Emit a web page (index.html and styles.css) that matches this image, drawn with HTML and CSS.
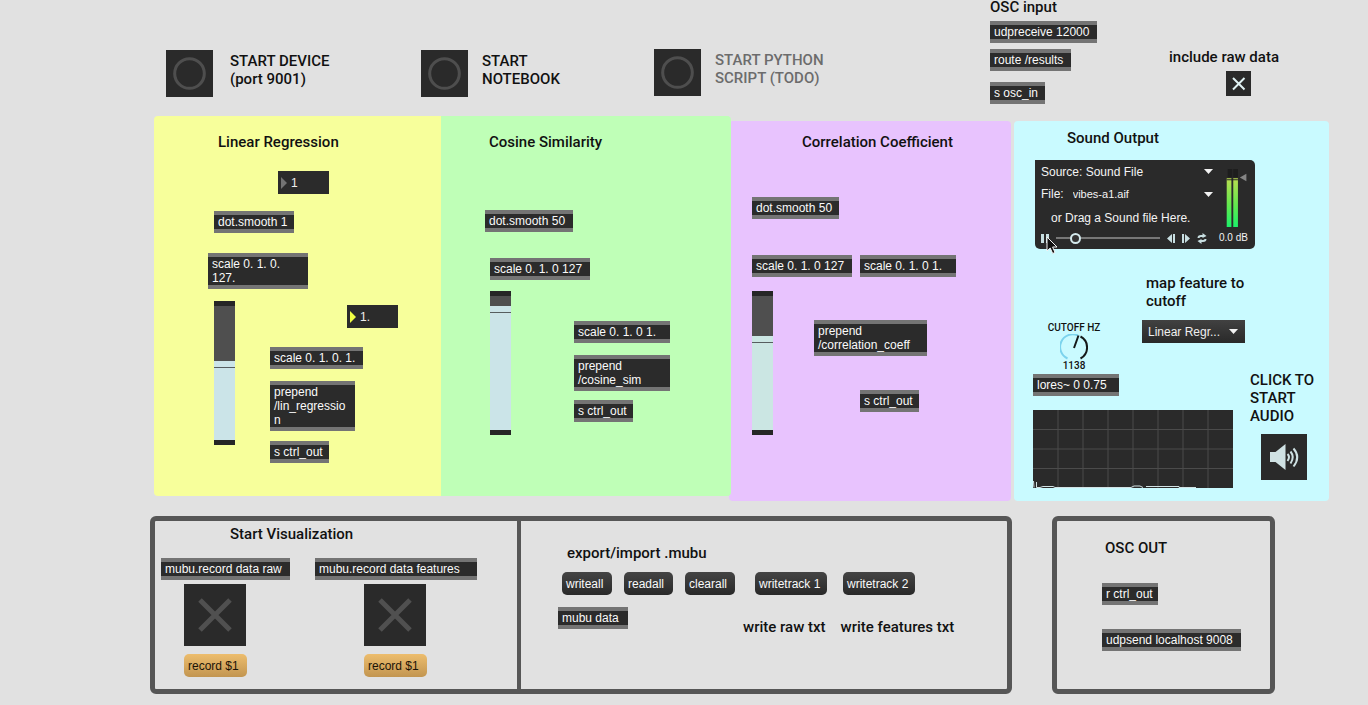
FILE: index.html
```html
<!DOCTYPE html>
<html lang="en">
<head>
<meta charset="utf-8">
<title>Feature patch</title>
<link rel="stylesheet" href="styles.css">
</head>
<body>
<header class="top">
  <div class="launch">
    <button class="bang" aria-label="Start device"><svg viewBox="0 0 46 46"><circle cx="23" cy="23" r="14.500"/></svg></button>
    <p class="note">START DEVICE<br>(port 9001)</p>
  </div>
  <div class="launch launch-notebook">
    <button class="bang" aria-label="Start notebook"><svg viewBox="0 0 46 46"><circle cx="23" cy="23" r="14.500"/></svg></button>
    <p class="note">START<br>NOTEBOOK</p>
  </div>
  <div class="launch launch-script">
    <button class="bang" aria-label="Start Python script"><svg viewBox="0 0 46 46"><circle cx="23" cy="23" r="14.500"/></svg></button>
    <p class="note note-dim">START PYTHON<br>SCRIPT (TODO)</p>
  </div>
  <section class="osc-in">
    <h2 class="note">OSC input</h2>
    <div class="obj w-udp">udpreceive 12000</div>
    <div class="obj w-route">route /results</div>
    <div class="obj obj-send w-osc">s osc_in</div>
  </section>
  <label class="raw">
    <span class="note">include raw data</span>
    <span class="toggle toggle-small"><input type="checkbox" checked><svg viewBox="0 0 25 25"><path d="M7 7L18.500 18.500M18.500 7L7 18.500"/></svg></span>
  </label>
</header>

<main class="panels">
  <section class="panel linear">
    <h2 class="note at lin-title">Linear Regression</h2>
    <label class="number at lin-n1"><svg viewBox="0 0 6 12"><path d="M0 0L6 6L0 12Z"/></svg><input type="text" value="1" aria-label="Smoothing"></label>
    <div class="obj at lin-dot">dot.smooth 1</div>
    <div class="obj at lin-scale">scale 0. 1. 0.<br>127.</div>
    <input class="slider at lin-slider" type="range" value="53" aria-label="Linear level" style="--level:60px">
    <label class="number live at lin-n2"><svg viewBox="0 0 6 12"><path d="M0 0L6 6L0 12Z"/></svg><input type="text" value="1." aria-label="Linear value"></label>
    <div class="obj at lin-scale2">scale 0. 1. 0. 1.</div>
    <div class="obj at lin-prep">prepend<br>/lin_regressio<br>n</div>
    <div class="obj at lin-send">s ctrl_out</div>
  </section>

  <section class="panel cosine">
    <h2 class="note at cos-title">Cosine Similarity</h2>
    <div class="obj at cos-dot">dot.smooth 50</div>
    <div class="obj at cos-scale">scale 0. 1. 0 127</div>
    <input class="slider at cos-slider" type="range" value="90" aria-label="Cosine level" style="--level:15px">
    <div class="obj at cos-scale2">scale 0. 1. 0 1.</div>
    <div class="obj at cos-prep">prepend<br>/cosine_sim</div>
    <div class="obj at cos-send">s ctrl_out</div>
  </section>

  <section class="panel correlation">
    <h2 class="note at cor-title">Correlation Coefficient</h2>
    <div class="obj at cor-dot">dot.smooth 50</div>
    <div class="obj at cor-scale">scale 0. 1. 0 127</div>
    <div class="obj at cor-scale2">scale 0. 1. 0 1.</div>
    <input class="slider mint at cor-slider" type="range" value="65" aria-label="Correlation level" style="--level:45px">
    <div class="obj at cor-prep">prepend<br>/correlation_coeff</div>
    <div class="obj at cor-send">s ctrl_out</div>
  </section>

  <section class="panel sound">
    <h2 class="note at snd-title">Sound Output</h2>
    <div class="player at snd-player">
      <div class="source">
        <label class="pick"><select class="pick-source" aria-label="Source"><option>Source: Sound File</option></select><svg class="caret" viewBox="0 0 9 5"><path d="M0 0H9L4.500 5Z"/></svg></label>
        <label class="pick pick-row">File:<select class="pick-file"><option>vibes-a1.aif</option></select><svg class="caret" viewBox="0 0 9 5"><path d="M0 0H9L4.500 5Z"/></svg></label>
        <p class="drop">or Drag a Sound file Here.</p>
        <div class="transport">
          <button aria-label="Pause"><svg viewBox="0 0 8 9"><path d="M0 0H3V9H0ZM5 0H8V9H5Z"/></svg></button>
          <input class="seek" type="range" min="0" max="100" value="15" aria-label="Position">
          <button aria-label="Back"><svg viewBox="0 0 8 9"><path d="M5 0V9L0 4.500ZM6 0H8V9H6Z"/></svg></button>
          <button aria-label="Forward"><svg viewBox="0 0 8 9"><path d="M0 0H2V9H0ZM3 0L8 4.500L3 9Z"/></svg></button>
          <button aria-label="Loop"><svg class="loop" viewBox="0 0 10 11"><path class="arc" d="M1.500 5Q1.500 3 4 3H6M8.500 6Q8.500 8 6 8H4"/><path d="M5.500 0L9.500 3L5.500 5ZM4.500 6V11L0.500 8Z"/></svg></button>
        </div>
      </div>
      <div class="gain">
        <svg class="meter" viewBox="0 0 22 62">
          <defs><linearGradient id="lvl" x1="0" y1="0" x2="0" y2="1"><stop offset="0" stop-color="#b9dc50"/><stop offset=".55" stop-color="#62e94e"/><stop offset="1" stop-color="#1cf06a"/></linearGradient></defs>
          <path fill="#1d1d1d" d="M1 0H6V9H1ZM7 0H12V9H7Z"/>
          <path fill="url(#lvl)" d="M0 10H5V62H0ZM7 10H12V62H7Z"/>
          <path stroke="#202020" d="M0 11.500H12"/>
          <path fill="#858585" d="M21 5V13L14 9Z"/>
        </svg>
        <span class="db">0.0 dB</span>
      </div>
    </div>
    <svg class="pointer at" viewBox="0 0 12 19"><path d="M1 1V15L4.200 12L6.700 17.500L9 16.500L6.600 11H11Z"/></svg>
    <p class="note at snd-map">map feature to<br>cutoff</p>
    <label class="menu at snd-menu"><select aria-label="Map feature to cutoff"><option>Linear Regr...</option></select><svg class="caret" viewBox="0 0 9 5"><path d="M0 0H9L4.500 5Z"/></svg></label>
    <div class="dial at snd-dial">
      <span>CUTOFF HZ</span>
      <svg viewBox="0 0 28 26"><path class="arc-on" d="M7.500 24.500A12.500 12.500 0 0 1 18 1.500"/><path class="arc-off" d="M20.500 2.500A12.500 12.500 0 0 1 20.500 24.500M14 14L18.500 1.500"/></svg>
      <span>1138</span>
    </div>
    <div class="obj at snd-lores">lores~ 0 0.75</div>
    <svg class="scope at snd-scope" viewBox="0 0 200 78">
      <rect width="200" height="78" fill="#2a2a2a"/>
      <path class="grid-line" d="M25 0V78M50 0V78M75 0V78M100 0V78M125 0V78M150 0V78M175 0V78M0 19.500H200M0 39H200M0 58.500H200"/>
      <path class="trace" d="M0.500 71L1 77.500M3.500 72V77.500H7L10 76.500H20L22 77.500H98L101 76H107L110 77.500M113 76.500H146V77.500H163"/>
    </svg>
    <p class="note at snd-click">CLICK TO<br>START<br>AUDIO</p>
    <button class="audio at snd-audio" aria-label="Start audio"><svg viewBox="0 0 46 46"><path class="cone" d="M9 18H14.500L24.500 10V36L14.500 28H9Z"/><path class="wave" d="M26.500 20Q29.500 23 26.500 27M29.500 17.500Q34 23 29.500 29.500M32.500 14.500Q40 23 32.500 32.500"/></svg></button>
  </section>
</main>

<footer class="bottom">
  <div class="frame split">
    <section class="visual">
      <h2 class="note">Start Visualization</h2>
      <div class="recorders">
        <div class="recorder w-raw">
          <div class="obj">mubu.record data raw</div>
          <span class="toggle toggle-big"><input type="checkbox" aria-label="Record raw"><svg viewBox="0 0 62 62"><path d="M16 16L46 46M46 16L16 46"/></svg></span>
          <button class="msg msg-gold">record $1</button>
        </div>
        <div class="recorder recorder-features">
          <div class="obj">mubu.record data features</div>
          <span class="toggle toggle-big"><input type="checkbox" aria-label="Record features"><svg viewBox="0 0 62 62"><path d="M16 16L46 46M46 16L16 46"/></svg></span>
          <button class="msg msg-gold">record $1</button>
        </div>
      </div>
    </section>
    <section class="files">
      <h2 class="note">export/import .mubu</h2>
      <div class="messages">
        <button class="msg w-write">writeall</button>
        <button class="msg w-read">readall</button>
        <button class="msg w-write">clearall</button>
        <button class="msg w-track track-first">writetrack 1</button>
        <button class="msg w-track">writetrack 2</button>
      </div>
      <div class="data-row">
        <div class="obj w-mubu">mubu data</div>
        <p class="note">write raw txt</p>
        <p class="note">write features txt</p>
      </div>
    </section>
  </div>
  <section class="frame osc-out">
    <h2 class="note">OSC OUT</h2>
    <div class="obj w-ctrl">r ctrl_out</div>
    <div class="obj w-send">udpsend localhost 9008</div>
  </section>
</footer>
</body>
</html>
```

FILE: styles.css
```css
* { box-sizing: border-box; }
body { margin: 0; background: #e1e1e1; color: #111; font: 12px/14px "Liberation Sans", Arial, sans-serif; }
button, input, select { font: inherit; color: inherit; margin: 0; padding: 0; border: 0; background: none; appearance: none; border-radius: 0; }
svg { display: block; }
p { margin: 0; }
.note { margin: 0; font: 500 15px/18px Roboto, "Liberation Sans", sans-serif; white-space: nowrap; }
.note-dim { color: #6c6c6c; }

/* patcher objects */
.obj { background: #2b2b2b; color: #fafafa; border: solid #747474; border-width: 4px 0; padding: 0 4px; white-space: nowrap; }
.at { position: absolute; }

/* header */
.top { display: grid; grid-template-columns: minmax(0, 255fr) minmax(0, 233fr) minmax(0, 336fr) minmax(0, 180fr) minmax(0, 108fr); padding: 0 90px 0 166px; min-height: 116px; }
.launch { display: flex; align-items: flex-start; gap: 17px; padding-top: 50px; }
.launch-notebook { gap: 14px; }
.launch-script { gap: 14px; padding-top: 49px; }
.launch .note { padding-top: 2px; }
.bang { width: 47px; height: 47px; background: #2a2a2a; }
.bang circle { fill: none; stroke: #4e4e4e; stroke-width: 3; }
.osc-in { display: flex; flex-direction: column; align-items: flex-start; gap: 6px; }
.osc-in .note { margin: -2px 0 -1px; }
.osc-in .obj-send { margin-top: 5px; }
.w-udp { width: 107px; }
.w-route { width: 81px; }
.w-osc { width: 55px; }
.raw { display: flex; flex-direction: column; align-items: center; gap: 5px; padding-top: 48px; }

/* toggles */
.toggle { display: grid; background: #2a2a2a; }
.toggle > * { grid-area: 1 / 1; width: 100%; height: 100%; }
.toggle svg { pointer-events: none; fill: none; stroke: #e0f2f3; stroke-width: 2; }
.toggle-small { width: 25px; height: 25px; margin-left: 28px; }
.toggle-big { width: 62px; height: 62px; }
.toggle-big svg { stroke: #505050; stroke-width: 5; }

/* feature panels */
.panels { display: grid; grid-template-columns: 287fr 290fr 280fr 318fr; padding: 0 39px 0 154px; }
.panel { position: relative; min-height: 380px; margin-bottom: 5px; border-radius: 4px; }
.linear { background: #f7ff9b; border-radius: 4px 0 0 4px; }
.cosine { background: #bfffb7; border-radius: 0 4px 4px 0; z-index: 1; }
.correlation { background: #e8c3fe; margin: 5px 0 0 -2px; }
.sound { background: #c9faff; margin: 5px 0 0 3px; }

.number { display: flex; align-items: center; gap: 4px; width: 51px; height: 23px; padding-left: 3px; background: #2b2b2b; color: #eee; }
.number svg { width: 6px; height: 12px; fill: #737373; }
.number input { width: 34px; }
.number.live svg { fill: #f2ff45; }

.slider { width: 21px; height: 144px; --on: #cbe4e8;
  background: linear-gradient(#262626 5px, #4f4f4f 5px var(--level), var(--on) var(--level) calc(var(--level) + 6px), #565d5f calc(var(--level) + 6px) calc(var(--level) + 7px), var(--on) calc(var(--level) + 7px) 139px, #262626 139px); }
.slider.mint { --on: #cbe6e3; }
.slider::-webkit-slider-thumb { appearance: none; width: 1px; height: 1px; }

.lin-title { left: 64px; top: 17px; }
.lin-n1 { left: 124px; top: 55px; }
.lin-dot { left: 60px; top: 95px; width: 80px; }
.lin-scale { left: 54px; top: 137px; width: 100px; }
.lin-slider { left: 60px; top: 185px; }
.lin-n2 { left: 193px; top: 189px; }
.lin-scale2 { left: 116px; top: 231px; width: 93px; }
.lin-prep { left: 116px; top: 265px; width: 85px; }
.lin-send { left: 116px; top: 325px; width: 59px; }

.cos-title { left: 48px; top: 17px; }
.cos-dot { left: 44px; top: 94px; width: 88px; }
.cos-scale { left: 49px; top: 142px; width: 100px; }
.cos-slider { left: 49px; top: 175px; }
.cos-scale2 { left: 133px; top: 205px; width: 96px; }
.cos-prep { left: 133px; top: 239px; width: 96px; }
.cos-send { left: 133px; top: 284px; width: 59px; }

.cor-title { left: 73px; top: 12px; }
.cor-dot { left: 23px; top: 76px; width: 87px; }
.cor-scale { left: 23px; top: 134px; width: 100px; }
.cor-scale2 { left: 131px; top: 134px; width: 96px; }
.cor-slider { left: 23px; top: 170px; }
.cor-prep { left: 85px; top: 199px; width: 113px; }
.cor-send { left: 131px; top: 269px; width: 59px; }

.snd-title { left: 53px; top: 8px; }
.snd-player { left: 21px; top: 39px; }
.snd-map { left: 132px; top: 153px; }
.snd-menu { left: 128px; top: 199px; }
.snd-dial { left: 20px; top: 201px; }
.snd-lores { left: 19px; top: 253px; width: 86px; }
.snd-scope { left: 19px; top: 289px; }
.snd-click { left: 236px; top: 250px; }
.snd-audio { left: 247px; top: 313px; }

/* sound file player */
.player { display: flex; gap: 6px; width: 220px; height: 89px; padding: 4px 7px 4px 6px; background: #2a2a2a; color: #f4f4f4; border-radius: 0 5px 5px 5px; }
.source { display: flex; flex-direction: column; width: 172px; }
.pick { display: flex; align-items: center; height: 15px; }
.pick select { flex: 1; min-width: 0; }
.caret { width: 9px; height: 5px; fill: #f2f2f2; pointer-events: none; }
.pick-row { height: 16px; margin-top: 7px; gap: 9px; }
.pick-file { font-size: 11px; }
.drop { padding: 9px 0 0 10px; white-space: nowrap; }
.transport { display: flex; align-items: center; gap: 7px; margin-top: 7px; height: 12px; padding-right: 6px; }
.transport button { flex: none; }
.transport svg { width: 8px; height: 9px; fill: #c8dfe2; }
.transport .loop { width: 10px; height: 11px; }
.transport .arc { fill: none; stroke: #c8dfe2; stroke-width: 2; }
.seek { flex: 1; min-width: 0; height: 12px; background: linear-gradient(transparent 5px, #777 5px 7px, transparent 7px); }
.seek::-webkit-slider-thumb { appearance: none; width: 11px; height: 11px; border: 2px solid #d3e9ec; border-radius: 50%; background: #333; }
.gain { display: flex; flex-direction: column; align-items: center; gap: 4px; width: 30px; padding-top: 5px; }
.meter { width: 22px; height: 62px; margin-left: 7px; }
.db { font-size: 10px; white-space: nowrap; }
.pointer { left: 32px; top: 115px; width: 12px; height: 19px; fill: #111; stroke: #f4f4f4; }

.menu { display: flex; align-items: center; gap: 4px; width: 103px; height: 23px; padding: 0 7px 0 6px; background: linear-gradient(#414141, #292929); color: #efefef; }
.menu select { flex: 1; min-width: 0; }
.dial { display: flex; flex-direction: column; align-items: center; width: 80px; font: 500 10px/12px Roboto, sans-serif; }
.dial svg { width: 28px; height: 26px; fill: none; stroke-width: 2; }
.arc-on { stroke: #7bd3ed; }
.arc-off { stroke: #15191a; }
.scope { width: 200px; height: 78px; }
.grid-line { stroke: #4b4b4b; }
.trace { fill: none; stroke: #d2e2e4; }
.audio { width: 46px; height: 46px; background: #2a2a2a; }
.cone { fill: #cfe1e3; }
.wave { fill: none; stroke: #cfe1e3; stroke-width: 2; }

/* bottom boxes */
.bottom { display: grid; grid-template-columns: 862fr 223fr; column-gap: 40px; padding: 15px 93px 0 150px; }
.frame { border: 5px solid #565656; border-radius: 6px; min-height: 178px; }
.split { display: grid; grid-template-columns: 366fr 486fr; }
.visual { border-right: 4px solid #565656; padding: 4px 0 0 6px; }
.visual .note { padding-left: 69px; }
.recorders { display: flex; align-items: flex-start; gap: 25px; margin-top: 15px; }
.recorder { display: flex; flex-direction: column; align-items: flex-start; }
.recorder .obj { width: 100%; }
.recorder .toggle { margin: 4px 0 8px 23px; }
.recorder .msg { margin-left: 23px; }
.w-raw { width: 129px; }
.recorder-features { width: 162px; }
.recorder-features .toggle, .recorder-features .msg { margin-left: 49px; }

.msg { height: 23px; padding: 0 4px; border-radius: 5px; text-align: left; color: #fafafa; background: linear-gradient(#444, #292929); white-space: nowrap; }
.msg-gold { width: 63px; color: #1b1408; background: linear-gradient(#edbd6d, #c29550); }
.w-write { width: 50px; }
.w-read { width: 49px; }
.w-track { width: 72px; }
.files { padding: 23px 0 0 37px; }
.files .note { padding-left: 9px; }
.messages { display: flex; gap: 12px; margin: 10px 0 12px 4px; }
.track-first { margin: 0 4px 0 8px; }
.data-row { display: flex; align-items: flex-start; }
.data-row .note { padding: 11px 0 0; margin-left: 15px; }
.w-mubu { width: 70px; margin-right: 100px; }

.osc-out { padding: 18px 0 0 45px; }
.osc-out .note { padding-left: 3px; margin-bottom: 26px; }
.w-ctrl { width: 56px; margin-bottom: 24px; }
.w-send { width: 139px; }
```
